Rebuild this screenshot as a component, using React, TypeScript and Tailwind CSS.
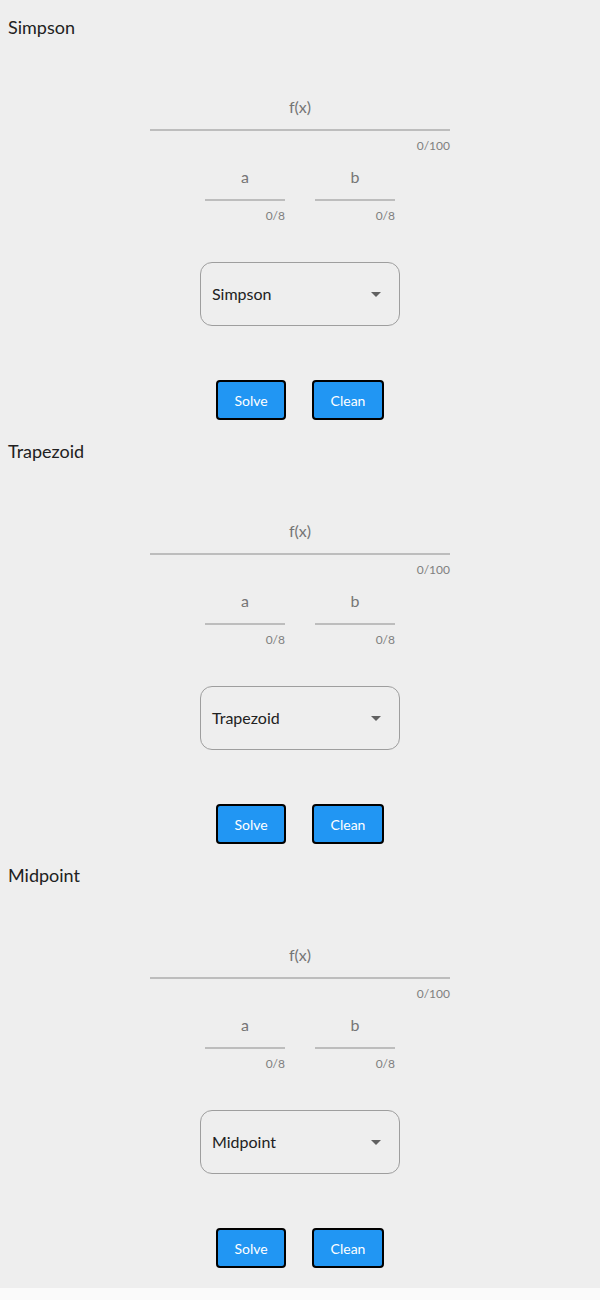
const methods = ["Simpson", "Trapezoid", "Midpoint"];

function Field({
  label,
  max,
  width,
}: {
  label: string;
  max: number;
  width: string;
}) {
  return (
    <div className={width}>
      <div className="border-b-2 border-[#bdbdbd] pb-[10px] text-center text-[16px] leading-[24px] text-[#757575]">
        {label}
      </div>
      <div className="mt-[7px] text-right text-[12px] leading-[16px] text-[#808080]">
        0/{max}
      </div>
    </div>
  );
}

function MethodSection({ name }: { name: string }) {
  return (
    <section className="flex h-[424px] flex-col">
      <h2 className="pl-2 pt-[15px] text-[18px] leading-[24px] text-[#212121]">
        {name}
      </h2>

      <div className="mt-[56px] flex justify-center">
        <Field label="f(x)" max={100} width="w-[300px]" />
      </div>

      <div className="mt-[11px] flex justify-center gap-[30px]">
        <Field label="a" max={8} width="w-[80px]" />
        <Field label="b" max={8} width="w-[80px]" />
      </div>

      {/* method select */}
      <div className="mt-[38px] flex justify-center">
        <div className="flex h-[64px] w-[200px] items-center justify-between rounded-[12px] border border-[#9e9e9e] pl-[11px] pr-[11px]">
          <span className="text-[16px] text-[#212121]">{name}</span>
          <svg className="h-6 w-6 text-[#616161]" viewBox="0 0 24 24">
            <path d="M7 10l5 5 5-5z" fill="currentColor" />
          </svg>
        </div>
      </div>

      <div className="mt-[54px] flex justify-center gap-[26px]">
        <button className="h-[40px] w-[70px] rounded-[4px] border-2 border-black bg-[#2196f3] text-[14px] text-white">
          Solve
        </button>
        <button className="h-[40px] w-[72px] rounded-[4px] border-2 border-black bg-[#2196f3] text-[14px] text-white">
          Clean
        </button>
      </div>
    </section>
  );
}

export default function App() {
  return (
    <div className="min-h-[1300px] bg-[#fafafa] font-['Lato',sans-serif]">
      <div className="bg-[#eeeeee] pb-4">
        {methods.map((m) => (
          <MethodSection key={m} name={m} />
        ))}
      </div>
    </div>
  );
}
